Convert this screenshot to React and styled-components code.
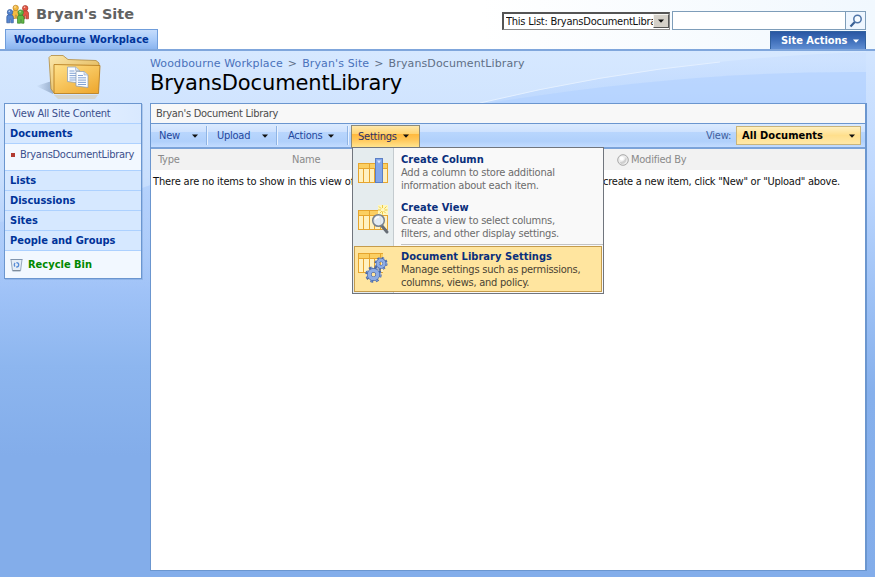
import React from "react";
import styled, { createGlobalStyle, css } from "styled-components";

const Global = createGlobalStyle`
  * { box-sizing: border-box; }
  body {
    margin: 0;
    overflow: hidden;
    font: 11px/13px "DejaVu Sans Condensed", "DejaVu Sans", sans-serif;
    letter-spacing: -0.24px;
    white-space: nowrap;
  }
`;

const Page = styled.div`
  position: relative;
  display: flex;
  flex-direction: column;
  width: 875px;
  height: 577px;
  overflow: hidden;
`;

const Backdrop = styled.svg`
  position: absolute;
  inset: 0;
  z-index: -1;
`;

const Header = styled.header`
  display: flex;
  justify-content: space-between;
  height: 51px;
  padding: 0 9px 0 5px;
  border-bottom: 2px solid #7fa6dc;
  background: linear-gradient(90deg, #fff 55%, #f1f8fe);
`;

const HeaderSide = styled.div`
  display: flex;
  flex-direction: column;
  justify-content: space-between;
  align-items: ${(p) => (p.$end ? "flex-end" : "flex-start")};
`;

const SiteName = styled.div`
  display: flex;
  align-items: center;
  gap: 6px;
  height: 30px;
  color: #626262;
  font-family: "DejaVu Sans", sans-serif;
  font-size: 14.5px;
  font-weight: bold;
  letter-spacing: 0;
`;

const Tab = styled.div`
  width: 153px;
  height: 20px;
  padding: 3px 0 0 8px;
  border: 1px solid #6f9ddb;
  border-bottom: 0;
  background: linear-gradient(#c5dcfc, #a9cbf9 50%, #8ab4ef);
  color: #003399;
  font-weight: bold;
  letter-spacing: 0.11px;
`;

const SearchRow = styled.div`
  display: flex;
  align-items: center;
  gap: 2px;
  margin-top: 11px;
`;

const Scope = styled.div`
  display: flex;
  align-items: center;
  width: 168px;
  height: 18px;
  padding-left: 2px;
  border: 1px solid #8a8a8a;
  border-top: 2px solid #555;
  border-left: 2px solid #555;
  background: #fff;
  color: #111;
`;

const ScopeText = styled.span`
  flex: 1;
  overflow: hidden;
`;

const ScopeArrow = styled.span`
  display: grid;
  place-items: center;
  width: 16px;
  height: 14px;
  border: 1px solid #f6f5f1;
  border-right-color: #555;
  border-bottom-color: #555;
  background: #d4d0c8;
`;

const Search = styled.div`
  display: flex;
  justify-content: flex-end;
  width: 194px;
  height: 19px;
  border: 1px solid #7e9db9;
  background: #fff;
`;

const SearchButton = styled.div`
  display: grid;
  place-items: center;
  width: 20px;
  border-left: 1px solid #7e9db9;
  background: #eef6ff;
`;

const SiteActions = styled.div`
  display: flex;
  align-items: center;
  gap: 6px;
  width: 96px;
  height: 18px;
  padding-left: 10px;
  border: 1px solid #31619f;
  border-bottom: 0;
  background: linear-gradient(#2a57a3, #3f6fba 50%, #5f8dd2);
  color: #fff;
  font-weight: bold;
  letter-spacing: -0.03px;
`;

const TitleBand = styled.div`
  display: grid;
  grid-template-columns: 150px 1fr;
  height: 52px;
`;

const FolderCell = styled.div`
  padding: 3px 0 0 36px;
`;

const Heading = styled.div`
  padding-top: 6px;
`;

const Crumbs = styled.div`
  display: flex;
  gap: 5px;
  color: #5f6f86;
  font-family: "DejaVu Sans", sans-serif;
  letter-spacing: 0.12px;
`;

const Crumb = styled.span`
  color: #4a72bb;
`;

const Title = styled.h1`
  margin: 0;
  color: #000;
  font-family: "DejaVu Sans", sans-serif;
  font-size: 21px;
  font-weight: normal;
  line-height: 26px;
  letter-spacing: -0.13px;
`;

const Body = styled.div`
  display: grid;
  grid-template-columns: 138px 717px;
  gap: 8px;
  align-items: start;
  padding-left: 4px;
`;

const edge = "#6b96cf";

const Nav = styled.nav`
  display: flex;
  flex-direction: column;
  border: 1px solid ${edge};
  box-shadow: 1px 1px rgba(107, 150, 207, 0.35);
`;

const rowKinds = {
  top: css`
    height: 20px;
    padding-left: 7px;
    background: linear-gradient(90deg, #f1f7ff, #d9e9ff);
    color: #3b4f8c;
  `,
  section: css`
    height: 20px;
    padding: 0 0 1px 5px;
    background: #d6e8ff;
    color: #003399;
    font-weight: bold;
    letter-spacing: 0;
  `,
  item: css`
    height: 27px;
    padding: 0 0 5px 6px;
    background: #f2f8ff;
    color: #3b4f8c;
    letter-spacing: -0.28px;
  `,
  bin: css`
    height: 27px;
    padding-left: 5px;
    border-bottom: 0;
    background: #f2f8ff;
    color: #008800;
    font-weight: bold;
    letter-spacing: 0;
  `,
};

const NavRow = styled.div`
  display: flex;
  align-items: center;
  gap: 5px;
  border-bottom: 1px solid #add1ff;
  ${(p) => rowKinds[p.$kind]}
`;

const Bullet = styled.i`
  width: 4px;
  height: 4px;
  background: #b23b32;
`;

const Main = styled.main`
  height: 468px;
  border: 1px solid ${edge};
  border-right-width: 2px;
  background: #fff;
`;

const Description = styled.div`
  height: 20px;
  padding: 3px 0 0 5px;
  border-bottom: 1px solid ${edge};
  background: #f8f8f8;
  color: #4c4c4c;
  letter-spacing: -0.29px;
`;

const Toolbar = styled.div`
  display: flex;
  align-items: center;
  height: 25px;
  border-bottom: 2px solid #7ba3d9;
  background: linear-gradient(#dcebfe, #cfe2fe 33%, #b9d6fd 34%, #b0d0fb 75%, #c3dcff);
  color: #24479c;
`;

const MenuButton = styled.div`
  display: flex;
  align-items: center;
  justify-content: space-between;
  width: ${(p) => p.$w}px;
  height: 19px;
  padding: 0 ${(p) => p.$end}px 0 ${(p) => p.$start}px;
  border-right: 1px solid #8fb4e4;
  box-shadow: 1px 0 #e8f2ff;
`;

const ActiveButton = styled.div`
  position: relative;
  display: flex;
  align-items: center;
  gap: 6px;
  width: 69px;
  height: 23px;
  margin: 1px 0 0 3px;
  padding: 0 6px;
  border: 1px solid #8d8b79;
  background: linear-gradient(#ffe8ab, #ffd574 36%, #ffb83c 38%, #ffc658 65%, #ffe48e);
  color: #2d3166;
`;

const ViewPicker = styled.div`
  display: flex;
  align-items: center;
  gap: 5px;
  margin-left: auto;
  padding-right: 4px;
  color: #3f5f9d;
`;

const ViewValue = styled.div`
  display: flex;
  align-items: center;
  justify-content: space-between;
  width: 125px;
  height: 19px;
  padding: 0 5px;
  border: 1px solid #c9b47a;
  background: linear-gradient(#fff0c0, #ffdf8c 50%, #ffe8a8);
  color: #000;
  font-weight: bold;
  letter-spacing: 0.04px;
`;

const Columns = styled.div`
  display: grid;
  grid-template-columns: 134px 325px 1fr;
  align-items: center;
  height: 21px;
  padding-left: 7px;
  background: #f2f2f2;
  color: #8a8a8a;
`;

const SortableColumn = styled.span`
  display: flex;
  align-items: center;
  gap: 2px;
`;

const Empty = styled.div`
  display: flex;
  padding: 5px 0 0 2px;
  color: #111;
`;

const Lead = styled.span`
  width: 450px;
  letter-spacing: -0.15px;
`;

const Menu = styled.div`
  position: absolute;
  top: 21px;
  left: 0;
  z-index: 2;
  display: flex;
  flex-direction: column;
  width: 252px;
  height: 147px;
  border: 1px solid #70757d;
  background: linear-gradient(90deg, #e5ecee 40px, #c4cbcf 40px, #c4cbcf 41px, #f9f9f9 41px);
`;

const MenuItem = styled.div`
  display: grid;
  grid-template-columns: 44px 1fr;
  align-items: start;
  height: ${(p) => p.$h}px;
  margin: ${(p) => (p.$on ? "1px" : "0 1px")};
  padding: ${(p) => (p.$on ? "3px 0 0 2px" : "5px 0 0 3px")};
  ${(p) =>
    p.$on &&
    css`
      border: 1px solid #c59c4c;
      background: #ffe59f;
    `}
`;

const MenuText = styled.div`
  color: ${(p) => (p.$on ? "#4a4333" : "#6c6c6c")};
`;

const MenuTitle = styled.div`
  color: #0a2f7c;
  font-weight: bold;
  letter-spacing: 0.04px;
`;

const Divider = styled.div`
  height: 1px;
  margin-left: 48px;
  background: #c3c3c3;
`;

const Arrow = ({ color = "#111" }) => (
  <svg width="6" height="4" viewBox="0 0 6 4">
    <path d="M0 0.5H6L3 3.7Z" fill={color} />
  </svg>
);

const Person = ({ x, y, fill, dark }) => (
  <g transform={`translate(${x} ${y})`} stroke={dark} strokeWidth=".7" fill={fill}>
    <path d="M1 14V8Q1 5.8 4 5.8T7.500 8V14H5V10.500H4V14Z" />
    <circle cx="4.200" cy="3.400" r="2.700" />
    <circle cx="3.500" cy="2.500" r=".8" fill="#fff" opacity=".7" stroke="none" />
  </g>
);

const PeopleIcon = () => (
  <svg width="25" height="22" viewBox="0 0 25 22">
    <Person x={6.500} y={0.500} fill="#f4bb42" dark="#bf8220" />
    <Person x={16} y={0.800} fill="#e35542" dark="#a63a2c" />
    <Person x={0.800} y={4.800} fill="#5585d0" dark="#375c9c" />
    <Person x={11.500} y={5.200} fill="#62b844" dark="#36812a" />
  </svg>
);

const Sheet = ({ x, y }) => (
  <g transform={`translate(${x} ${y})`}>
    <path d="M0 0H8L12 3.500V16L0 14.500Z" fill="#fbfdff" stroke="#8499b5" strokeWidth=".7" />
    <path d="M8 0V3.500H12" fill="#d5e2f2" stroke="#8499b5" strokeWidth=".5" />
    <path d="M2 4H7M2 6.300H10M2 8.600H10M2 10.900H10M2 13H10" stroke="#7598cf" strokeWidth=".9" />
  </g>
);

const FolderIcon = () => (
  <svg width="68" height="48" viewBox="0 0 68 48">
    <defs>
      <linearGradient id="back" x2="1" y2="1">
        <stop offset="0" stopColor="#fbe8ad" />
        <stop offset="1" stopColor="#dba83f" />
      </linearGradient>
      <linearGradient id="front" x2=".8" y2="1">
        <stop offset="0" stopColor="#ffe18a" />
        <stop offset="1" stopColor="#efaa32" />
      </linearGradient>
      <linearGradient id="shade" x1="1" x2="0">
        <stop offset="0" stopColor="#5a7396" stopOpacity=".5" />
        <stop offset="1" stopColor="#5a7396" stopOpacity="0" />
      </linearGradient>
    </defs>
    <path d="M17 40L0 32L16 27Z" fill="url(#shade)" />
    <path d="M18 41H62L59 45H22Z" fill="#dda94c" opacity=".25" />
    <path d="M13 3.500L15 1.500H27L32 5.500L60 6.500L63 9V20L18 39L15 35Z" fill="url(#back)" stroke="#b18a3c" strokeWidth=".8" />
    <path d="M18 10.500L64 11.500L62.500 39.500H18Z" fill="url(#front)" stroke="#b98022" strokeWidth=".9" />
    <Sheet x={31.500} y={13} />
    <Sheet x={40} y={17.500} />
  </svg>
);

const BinIcon = () => (
  <svg width="13" height="14" viewBox="0 0 13 14">
    <path d="M1 1.500L2.500 13H10.500L12 1.500Z" fill="#e5edf6" stroke="#98a9bd" />
    <path d="M.5 1.500H12.500" stroke="#8195ae" />
    <circle cx="6.500" cy="6.800" r="2.200" fill="none" stroke="#568bd6" strokeWidth="1.300" strokeDasharray="3.400 1.200" />
    <path d="M3 12.500H10" stroke="#7f8d9c" />
  </svg>
);

const Grid = () => (
  <>
    <rect x="1.500" y="5.500" width="29" height="19" fill="#fff1c0" stroke="#e6a52e" />
    <rect x="2" y="6" width="28" height="4" fill="#fbcf62" />
    <path d="M1 10.500H31M6.500 10V24M12.500 6V24M17.500 10V24M23.500 6V24" stroke="#e6a52e" />
  </>
);

const ColumnIcon = () => (
  <svg width="34" height="38" viewBox="0 -5 34 38">
    <Grid />
    <rect x="18.500" y=".5" width="7" height="24" fill="#83a7ea" stroke="#5b7fc5" />
    <path d="M20 2.500H24L22 5.500Z" fill="#dbe7ff" />
  </svg>
);

const ViewIcon = () => (
  <svg width="34" height="38" viewBox="0 -4 34 38">
    <Grid />
    <path d="M21 0H31V10H21Z" fill="#fff8bf" />
    <path d="M25.500 0V10M21 5H31M22 1.500L29.500 9M29.500 1.500L22 9" stroke="#eec943" strokeDasharray="3 3.500" />
    <path d="M25 21L30 27" stroke="#666d75" strokeWidth="3" strokeLinecap="round" />
    <circle cx="21.500" cy="15.500" r="5.800" fill="#dfeafa" fillOpacity=".9" stroke="#77818d" strokeWidth="1.500" />
    <path d="M18 14.500Q19 12 22 12" stroke="#fff" strokeWidth="1.500" fill="none" />
  </svg>
);

const Gear = ({ x, y, s }) => (
  <g transform={`translate(${x} ${y}) scale(${s})`} fill="none">
    <circle r="6.500" stroke="#4a68a6" strokeWidth="3.400" strokeDasharray="2.600 2.505" />
    <circle r="6.200" stroke="#7e9fdc" strokeWidth="2.400" strokeDasharray="1.800 3.305" strokeDashoffset="-.4" />
    <circle r="4.200" stroke="#4a68a6" strokeWidth="4.600" />
    <circle r="4.200" stroke="#8eace4" strokeWidth="3.300" />
  </g>
);

const SettingsIcon = () => (
  <svg width="34" height="38" viewBox="0 -2 34 38">
    <g transform="translate(0 -4)">
      <Grid />
    </g>
    <path d="M26 0H32V21H26Z" fill="#ffe59f" />
    <Gear x={24} y={11.500} s={0.800} />
    <Gear x={16.500} y={22.500} s={1} />
  </svg>
);

const SearchIcon = () => (
  <svg width="14" height="14" viewBox="0 0 14 14">
    <path d="M5.800 8L1.500 12.500" stroke="#396095" strokeWidth="2.200" />
    <circle cx="8.500" cy="5" r="3.700" fill="#f6fbff" stroke="#4e74a8" strokeWidth="1.500" />
  </svg>
);

const PresenceIcon = () => (
  <svg width="12" height="12" viewBox="0 0 12 12">
    <circle cx="6" cy="6" r="5.300" fill="#ededed" stroke="#a8a8a8" />
    <path d="M2.500 8Q8 8 9 2.500A5 5 0 0 1 4 10Z" fill="#cfcfcf" />
    <circle cx="4.800" cy="4.600" r="2" fill="#fff" />
  </svg>
);

const PageBackdrop = () => (
  <Backdrop width="875" height="577" viewBox="0 0 875 577">
    <defs>
      <linearGradient id="base" gradientUnits="userSpaceOnUse" x1="0" y1="51" x2="0" y2="577">
        <stop offset="0" stopColor="#d6e8ff" />
        <stop offset=".24" stopColor="#c9dffd" />
        <stop offset=".3" stopColor="#bdd7fc" />
        <stop offset=".46" stopColor="#9fc2f7" />
        <stop offset=".6" stopColor="#8db6ef" />
        <stop offset=".77" stopColor="#83adea" />
        <stop offset="1" stopColor="#83adea" />
      </linearGradient>
      <linearGradient id="sweep" gradientUnits="userSpaceOnUse" x1="0" y1="60" x2="0" y2="290">
        <stop offset="0" stopColor="#c9dfff" />
        <stop offset=".18" stopColor="#b5d3fe" />
        <stop offset=".6" stopColor="#abcbfb" />
        <stop offset="1" stopColor="#9fc2f7" stopOpacity="0" />
      </linearGradient>
      <linearGradient id="gutter" gradientUnits="userSpaceOnUse" x1="0" y1="51" x2="0" y2="577">
        <stop offset="0" stopColor="#d2e5ff" />
        <stop offset=".25" stopColor="#bdd7fe" />
        <stop offset=".45" stopColor="#a0c3f6" />
        <stop offset=".65" stopColor="#86b0ec" />
        <stop offset="1" stopColor="#83adea" />
      </linearGradient>
    </defs>
    <rect width="875" height="577" fill="url(#base)" />
    <path d="M0 222Q90 212 142 188Q300 130 480 103Q680 56 875 52V300H0Z" fill="url(#sweep)" opacity=".65" />
    <path d="M490 103Q690 70 875 72V104H490Z" fill="#b0d1ff" opacity=".6" />
    <path d="M480 103Q600 74 720 62" stroke="#e4f0ff" fill="none" />
    <rect x="866" y="51" width="9" height="526" fill="url(#gutter)" />
  </Backdrop>
);

const MenuEntry = ({ icon, title, lines, h, on }) => (
  <MenuItem $h={h} $on={on}>
    {icon}
    <MenuText $on={on}>
      <MenuTitle>{title}</MenuTitle>
      {lines.map((line) => (
        <div key={line}>{line}</div>
      ))}
    </MenuText>
  </MenuItem>
);

export default function App() {
  return (
    <Page>
      <Global />
      <PageBackdrop />
      <Header>
        <HeaderSide>
          <SiteName>
            <PeopleIcon />
            Bryan's Site
          </SiteName>
          <Tab>Woodbourne Workplace</Tab>
        </HeaderSide>
        <HeaderSide $end>
          <SearchRow>
            <Scope>
              <ScopeText>This List: BryansDocumentLibrary</ScopeText>
              <ScopeArrow>
                <Arrow />
              </ScopeArrow>
            </Scope>
            <Search>
              <SearchButton>
                <SearchIcon />
              </SearchButton>
            </Search>
          </SearchRow>
          <SiteActions>
            Site Actions <Arrow color="#fff" />
          </SiteActions>
        </HeaderSide>
      </Header>

      <TitleBand>
        <FolderCell>
          <FolderIcon />
        </FolderCell>
        <Heading>
          <Crumbs>
            <Crumb>Woodbourne Workplace</Crumb>&gt;
            <Crumb>Bryan's Site</Crumb>&gt;
            <span>BryansDocumentLibrary</span>
          </Crumbs>
          <Title>BryansDocumentLibrary</Title>
        </Heading>
      </TitleBand>

      <Body>
        <Nav>
          <NavRow $kind="top">View All Site Content</NavRow>
          <NavRow $kind="section">Documents</NavRow>
          <NavRow $kind="item">
            <Bullet />
            BryansDocumentLibrary
          </NavRow>
          <NavRow $kind="section">Lists</NavRow>
          <NavRow $kind="section">Discussions</NavRow>
          <NavRow $kind="section">Sites</NavRow>
          <NavRow $kind="section">People and Groups</NavRow>
          <NavRow $kind="bin">
            <BinIcon />
            Recycle Bin
          </NavRow>
        </Nav>

        <Main>
          <Description>Bryan's Document Library</Description>
          <Toolbar>
            <MenuButton $w={56} $start={8} $end={8}>
              New <Arrow />
            </MenuButton>
            <MenuButton $w={70} $start={10} $end={8}>
              Upload <Arrow />
            </MenuButton>
            <MenuButton $w={71} $start={11} $end={13}>
              Actions <Arrow />
            </MenuButton>
            <ActiveButton>
              Settings <Arrow />
              <Menu>
                <MenuEntry
                  h={48}
                  icon={<ColumnIcon />}
                  title="Create Column"
                  lines={["Add a column to store additional", "information about each item."]}
                />
                <MenuEntry
                  h={48}
                  icon={<ViewIcon />}
                  title="Create View"
                  lines={["Create a view to select columns,", "filters, and other display settings."]}
                />
                <Divider />
                <MenuEntry
                  on
                  h={46}
                  icon={<SettingsIcon />}
                  title="Document Library Settings"
                  lines={["Manage settings such as permissions,", "columns, views, and policy."]}
                />
              </Menu>
            </ActiveButton>
            <ViewPicker>
              View:
              <ViewValue>
                All Documents <Arrow />
              </ViewValue>
            </ViewPicker>
          </Toolbar>
          <Columns>
            <span>Type</span>
            <span>Name</span>
            <SortableColumn>
              <PresenceIcon />
              Modified By
            </SortableColumn>
          </Columns>
          <Empty>
            <Lead>There are no items to show in this view of the "Bryan's Document Library" library. To</Lead>
            <span>create a new item, click "New" or "Upload" above.</span>
          </Empty>
        </Main>
      </Body>
    </Page>
  );
}
